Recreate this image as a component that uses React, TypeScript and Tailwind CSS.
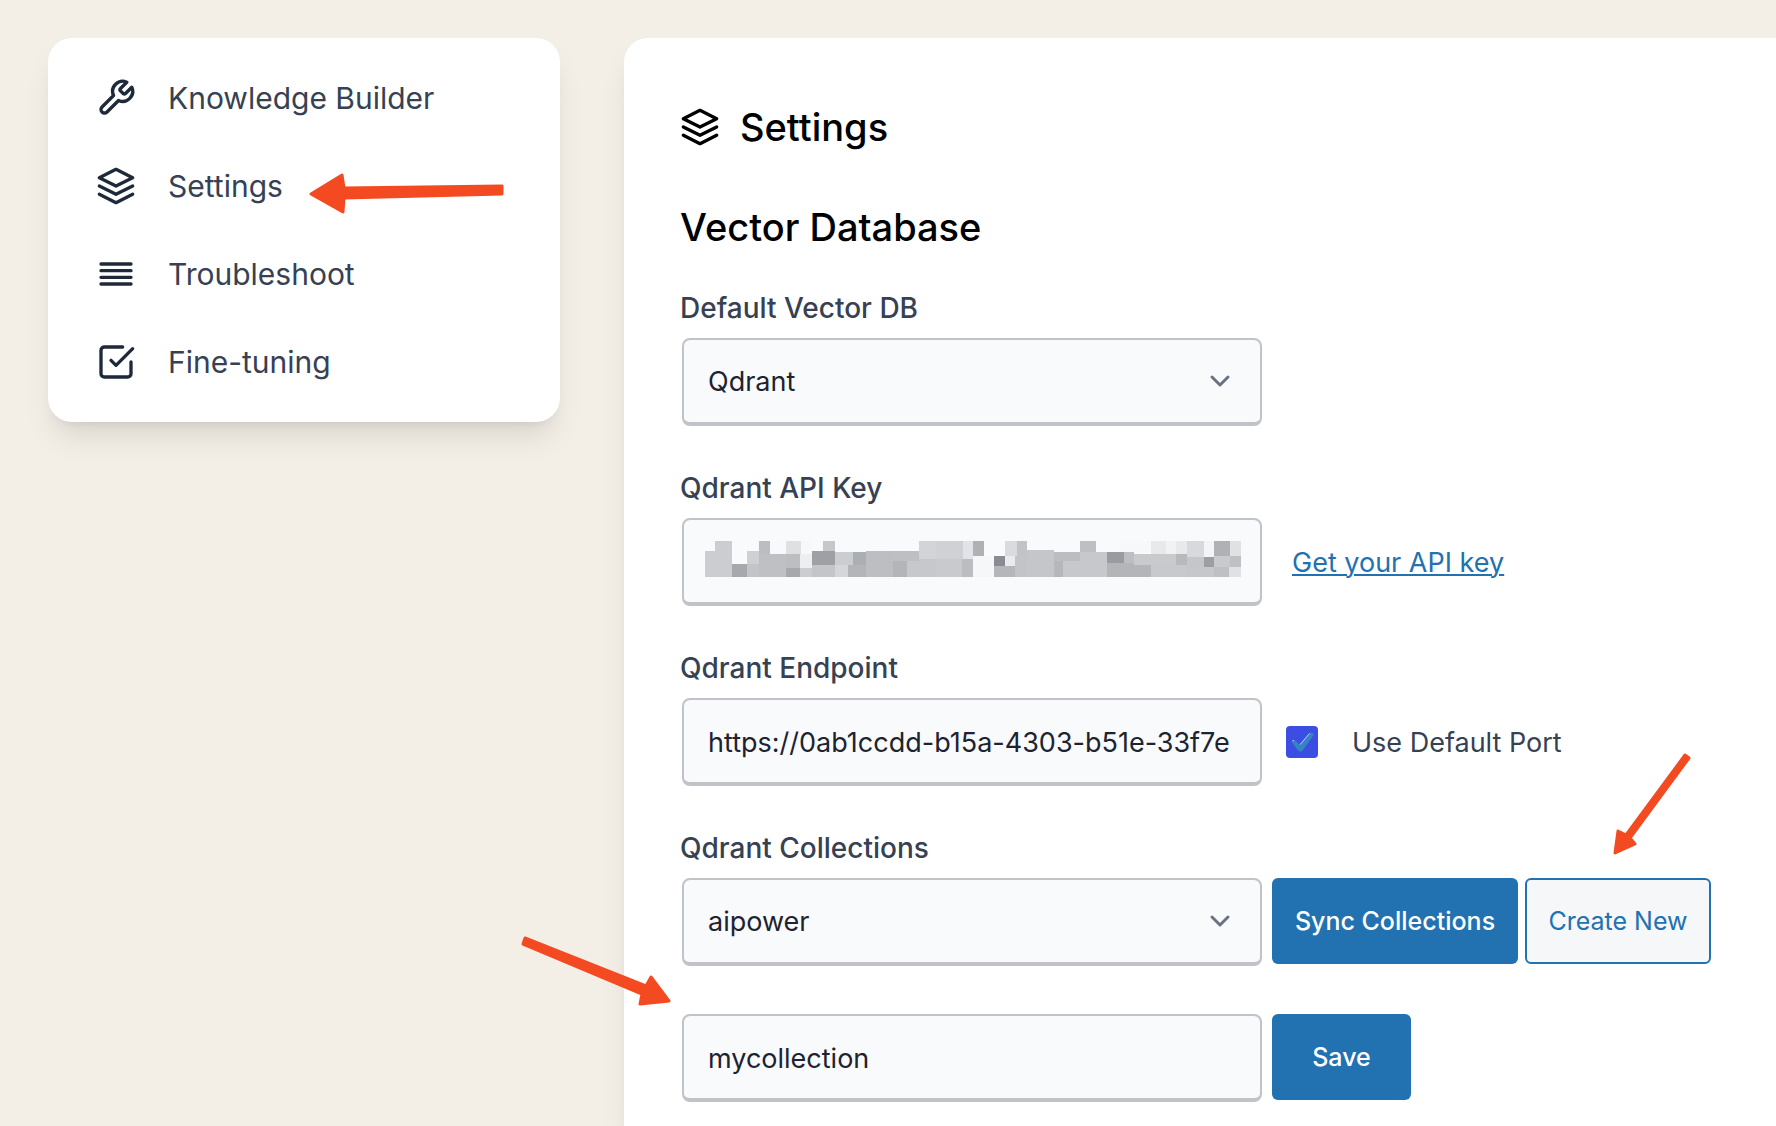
import type { ReactNode } from 'react';

const STROKE = {
  viewBox: '0 0 24 24',
  fill: 'none',
  stroke: 'currentColor',
  strokeWidth: 2,
  strokeLinecap: 'round' as const,
  strokeLinejoin: 'round' as const,
  'aria-hidden': true,
};

function ToolIcon() {
  return (
    <svg {...STROKE} className="size-10 shrink-0">
      <path d="M14.7 6.3a1 1 0 0 0 0 1.4l1.6 1.6a1 1 0 0 0 1.4 0l3.77-3.77a6 6 0 0 1-7.94 7.94l-6.91 6.91a2.12 2.12 0 0 1-3-3l6.91-6.91a6 6 0 0 1 7.94-7.94l-3.76 3.76z" />
    </svg>
  );
}

function LayersIcon() {
  return (
    <svg {...STROKE} className="size-10 shrink-0">
      <polygon points="12 2 2 7 12 12 22 7 12 2" />
      <polyline points="2 17 12 22 22 17" />
      <polyline points="2 12 12 17 22 12" />
    </svg>
  );
}

function LinesIcon() {
  return (
    <svg {...STROKE} className="size-10 shrink-0">
      <path d="M21 6H3M21 10H3M21 14H3M21 18H3" />
    </svg>
  );
}

function CheckSquareIcon() {
  return (
    <svg {...STROKE} className="size-10 shrink-0">
      <polyline points="9 11 12 14 22 4" />
      <path d="M21 12v7a2 2 0 0 1-2 2H5a2 2 0 0 1-2-2V5a2 2 0 0 1 2-2h11" />
    </svg>
  );
}

type ArrowProps = { className: string; viewBox: string; points: string };

function Arrow({ className, viewBox, points }: ArrowProps) {
  return (
    <svg className={`pointer-events-none absolute z-10 ${className}`} viewBox={viewBox} aria-hidden="true">
      <polygon points={points} fill="#f44a22" stroke="#f44a22" strokeWidth="3" strokeLinejoin="round" />
    </svg>
  );
}

const NAV: { label: string; icon: ReactNode; marked?: boolean }[] = [
  { label: 'Knowledge Builder', icon: <ToolIcon /> },
  { label: 'Settings', icon: <LayersIcon />, marked: true },
  { label: 'Troubleshoot', icon: <LinesIcon /> },
  { label: 'Fine-tuning', icon: <CheckSquareIcon /> },
];

// Blocks of the redacted key: x, y, width, height, colour.
const BLOCKS: [number, number, number, number, string][] = [
  [15, 45, 81, 78, '#cccdd1'], [45, 15, 51, 30, '#cccdd1'], [96, 84, 45, 39, '#a7a8ae'],
  [141, 45, 36, 39, '#cfd0d4'], [141, 84, 36, 39, '#c3c4c8'], [177, 15, 33, 39, '#bcbdc1'],
  [177, 54, 81, 69, '#bfc0c4'], [210, 15, 48, 39, '#f8f9fa'], [258, 15, 45, 39, '#dfe0e2'],
  [303, 15, 33, 39, '#f7f8fa'], [258, 54, 42, 42, '#bdbec2'], [258, 96, 42, 27, '#a7a8ad'],
  [300, 54, 36, 42, '#edeef0'], [300, 96, 36, 27, '#cccdd1'], [336, 45, 69, 42, '#9fa0a5'],
  [336, 87, 69, 36, '#c4c5c9'], [369, 15, 36, 30, '#c6c7cb'], [405, 48, 54, 39, '#cccdd0'],
  [459, 48, 39, 39, '#aaafb4'], [405, 87, 39, 36, '#d5d6da'], [444, 87, 54, 36, '#b4b5b9'],
  [498, 45, 81, 78, '#bdbec2'], [579, 45, 78, 30, '#bebfc3'], [579, 75, 42, 48, '#b4b5b9'],
  [621, 75, 87, 48, '#c7c8cc'], [657, 69, 51, 6, '#c7c8cc'], [657, 15, 51, 54, '#d3d4d7'],
  [708, 15, 81, 54, '#d0d1d5'], [789, 15, 30, 54, '#e2e3e8'], [708, 69, 78, 54, '#c9cace'],
  [786, 69, 33, 54, '#bcbdc1'], [819, 15, 33, 45, '#b0b1b5'], [819, 60, 63, 63, '#f6f7f9'],
  [882, 60, 33, 30, '#8b8c93'], [915, 60, 30, 30, '#eaebed'], [915, 15, 36, 45, '#dadbdf'],
  [951, 15, 30, 45, '#c2c3c7'], [945, 60, 36, 63, '#c3c4c8'], [882, 90, 63, 33, '#b5b6ba'],
  [981, 42, 81, 81, '#c5c6ca'], [1062, 48, 78, 27, '#bcbdc1'], [1062, 75, 27, 48, '#b6b7bb'],
  [1089, 75, 51, 48, '#c7c8cc'], [1140, 15, 48, 33, '#bebfc3'], [1140, 48, 81, 75, '#c7c8cc'],
  [1221, 48, 51, 33, '#989ba1'], [1272, 48, 30, 33, '#bdbec2'], [1221, 81, 132, 42, '#b4b5b9'],
  [1302, 54, 126, 33, '#c9cace'], [1353, 87, 108, 36, '#c8c9cd'], [1428, 54, 33, 33, '#b8b9bd'],
  [1260, 15, 93, 33, '#f7f8fa'], [1353, 15, 45, 39, '#e8e9eb'], [1398, 15, 30, 39, '#f1f2f4'],
  [1428, 15, 33, 39, '#e8e9eb'], [1461, 15, 51, 48, '#d8d9dc'], [1461, 63, 51, 30, '#c5c6ca'],
  [1512, 15, 30, 48, '#f3f4f6'], [1512, 63, 30, 30, '#9d9ea3'], [1461, 93, 81, 30, '#c6c7cb'],
  [1542, 15, 48, 45, '#b0b1b4'], [1542, 60, 48, 33, '#c9cace'], [1542, 93, 45, 30, '#bfc0c4'],
  [1590, 15, 33, 45, '#e0e1e3'], [1590, 60, 33, 33, '#bfc0c4'], [1587, 93, 36, 30, '#e0e1e4'],
];

const CARD_SHADOW = 'shadow-[0_20px_30px_-6px_rgba(0,0,0,0.1),0_8px_12px_-8px_rgba(0,0,0,0.1)]';
const FIELD =
  'block h-[88px] w-full appearance-none rounded-lg border-2 border-b-4 border-[#c1c3c9] bg-[#f9fafc] px-6 pt-0.5 text-[27px] text-[#1d2330] outline-none';
const LABEL = 'block text-[28px] leading-10 font-medium text-gray-700';
const HEADING = 'text-[38px] leading-[56px] font-medium text-black';
const PRIMARY = 'h-[86px] shrink-0 rounded-md bg-[#2271b1] pt-0.5 text-[25px] font-medium text-white';

function Dropdown({ id, value }: { id: string; value: string }) {
  return (
    <div className="relative w-[580px] shrink-0">
      <select id={id} className={FIELD} defaultValue={value}>
        <option>{value}</option>
      </select>
      <svg
        className="pointer-events-none absolute top-8 right-[30px] h-6 w-6 text-gray-500"
        viewBox="0 0 24 24"
        fill="none"
        stroke="currentColor"
        strokeWidth="3"
        strokeLinecap="round"
        strokeLinejoin="round"
        aria-hidden="true"
      >
        <path d="M4 7l8 8 8-8" />
      </svg>
    </div>
  );
}

function Field({ id, label, children }: { id: string; label: string; children: ReactNode }) {
  return (
    <div>
      <label htmlFor={id} className={LABEL}>
        {label}
      </label>
      <div className="mt-2.5 ml-0.5 flex items-start">{children}</div>
    </div>
  );
}

export default function App() {
  return (
    <div className="flex min-h-screen gap-16 overflow-x-hidden bg-[#f3efe7] pt-[38px] pl-12 font-['Inter',sans-serif]">
      <aside className={`w-[512px] shrink-0 self-start rounded-3xl bg-white p-4 ${CARD_SHADOW}`}>
        <nav>
          <ul>
            {NAV.map((item) => (
              <li key={item.label} className="relative">
                <button type="button" className="flex h-[88px] w-full items-center gap-8 px-8 text-left text-[30px] text-gray-700">
                  <span className="text-gray-800">{item.icon}</span>
                  {item.label}
                </button>
                {item.marked && (
                  <Arrow
                    className="top-[30px] left-[244px] h-[44px] w-[198px]"
                    viewBox="308 172 198 44"
                    points="311,194 342,175 344,188 502,186 502,194 344,198 343,212"
                  />
                )}
              </li>
            ))}
          </ul>
        </nav>
      </aside>

      <main className={`min-w-0 flex-1 rounded-tl-3xl bg-white pt-[61px] pb-6 pl-14 ${CARD_SHADOW}`}>
        <h1 className={`flex items-center gap-5 ${HEADING}`}>
          <LayersIcon />
          Settings
        </h1>
        <h2 className={`mt-11 ${HEADING}`}>Vector Database</h2>

        <form className="mt-[33px] flex flex-col gap-[42px]" onSubmit={(e) => e.preventDefault()}>
          <Field id="db" label="Default Vector DB">
            <Dropdown id="db" value="Qdrant" />
          </Field>

          <Field id="key" label="Qdrant API Key">
            <div className="relative w-[580px] shrink-0">
              <input id="key" type="text" className={FIELD} />
              <svg
                className="pointer-events-none absolute top-[23px] left-[23px] h-9 w-[536px]"
                viewBox="15 15 1608 108"
                shapeRendering="crispEdges"
                aria-hidden="true"
              >
                {BLOCKS.map(([x, y, w, h, fill]) => (
                  <rect key={`${x}-${y}`} x={x} y={y} width={w} height={h} fill={fill} />
                ))}
              </svg>
            </div>
            <a href="#key" className="ml-[30px] self-center pt-0.5 text-[27px] text-[#2271b1] underline decoration-2 underline-offset-2">
              Get your API key
            </a>
          </Field>

          <Field id="endpoint" label="Qdrant Endpoint">
            <div className="w-[580px] shrink-0">
              <input id="endpoint" type="text" className={FIELD} defaultValue="https://0ab1ccdd-b15a-4303-b51e-33f7e" />
            </div>
            <div className="ml-6 flex items-center self-center">
              <span className="relative size-8">
                <input
                  id="port"
                  type="checkbox"
                  defaultChecked
                  className="block size-8 appearance-none rounded-sm bg-[#3b4de2]"
                />
                <svg className="pointer-events-none absolute inset-0 size-8" viewBox="0 0 96 96" aria-hidden="true">
                  <path d="M18 47l5-5q3-1 6 2l12 13L71 22q4-3 8-2q5 2 4 7L51 73q-3 4-7 4q-5 0-8-4L18 50z" fill="#3582c4" />
                  <path d="M19 45l5-2M42 56L71 22" stroke="#b9d3f2" strokeWidth="3" fill="none" />
                </svg>
              </span>
              <label htmlFor="port" className="pt-0.5 pl-[34px] text-[27px] text-gray-700">
                Use Default Port
              </label>
            </div>
          </Field>

          <Field id="collections" label="Qdrant Collections">
            <Dropdown id="collections" value="aipower" />
            <button type="button" className={`ml-2.5 w-[246px] ${PRIMARY}`}>
              Sync Collections
            </button>
            <div className="relative ml-[7px] shrink-0">
              <button
                type="button"
                className="h-[86px] w-[186px] rounded-md border-2 border-[#2271b1] bg-[#f6f7f9] pt-0.5 text-[25px] text-[#2271b1]"
              >
                Create New
              </button>
              <Arrow
                className="-top-[126px] left-[87px] h-[105px] w-[80px]"
                viewBox="1612 752 80 105"
                points="1615,853 1618,831 1626,835 1685,755 1689,758 1630,838 1635,844"
              />
            </div>
          </Field>

          <div className="relative mt-1.5 ml-0.5 flex items-start">
            <div className="w-[580px] shrink-0">
              <input type="text" aria-label="New collection name" className={FIELD} defaultValue="mycollection" />
            </div>
            <button type="submit" className={`ml-2.5 w-[139px] ${PRIMARY}`}>
              Save
            </button>
            <Arrow
              className="-top-[79px] -left-[163px] h-[73px] w-[155px]"
              viewBox="519 935 155 73"
              points="525,938 523,944 642,994 640,1004 669,1001 651,977 646,986"
            />
          </div>
        </form>
      </main>
    </div>
  );
}
